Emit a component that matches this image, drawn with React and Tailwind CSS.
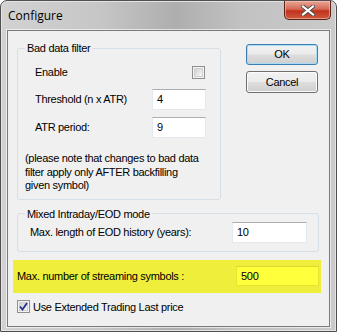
import React from "react";

const font = "font-['Liberation_Sans',Arial,sans-serif] text-[11px] tracking-[-0.3px] text-black";

const TextBox = ({ value, className = "", yellow = false }) => (
    <div
        className={
            "flex items-center pl-[4px] border " +
            (yellow
                ? "bg-[#ffff3c] border-[#e6e632] border-t-[#d8d830]"
                : "bg-white border-[#e3e9ef] border-t-[#abadb3]") +
            " " +
            className
        }
    >
        <span className="leading-none">{value}</span>
    </div>
);

const CheckBox = ({ checked }) => (
    <div className="w-[13px] h-[13px] border border-[#8e8f8f] bg-[#f4f4f4] p-[1px] shrink-0">
        <div className="w-full h-full border border-[#d0d0d0] bg-[linear-gradient(135deg,#cfcfcf_0%,#e6e6e6_55%,#f8f8f8_100%)] relative">
            {checked && (
                <svg viewBox="0 0 9 9" className="absolute -left-[1px] -top-[1px] w-[9px] h-[9px]">
                    <path d="M1 4.5 L3.5 7.5 L8 1" fill="none" stroke="#24318a" strokeWidth="1.8" />
                </svg>
            )}
        </div>
    </div>
);

const Group = ({ title, className = "", children }) => (
    <fieldset className={"border border-[#d5dfe5] rounded-[3px] " + className}>
        <legend className="ml-[7px] px-[2px] leading-[14px]">{title}</legend>
        {children}
    </fieldset>
);

const Button = ({ label, primary, className = "" }) => (
    <button
        className={
            "w-[72px] rounded-[3px] border flex items-center justify-center leading-none bg-[linear-gradient(180deg,#f2f2f2_0%,#ebebeb_48%,#dddddd_52%,#cfcfcf_100%)] " +
            (primary
                ? "border-[#3c7fb1] shadow-[inset_0_0_0_1px_#a7dcf4]"
                : "border-[#707070] shadow-[inset_0_0_0_1px_#fbfbfb]") +
            " " +
            className
        }
    >
        {label}
    </button>
);

export default function App() {
    return (
        <div className={"w-[337px] h-[332px] flex flex-col rounded-t-[7px] border border-[#505050] bg-[linear-gradient(90deg,#d2d2d2_0%,#c6c6c6_30%,#aeaeae_52%,#c2c2c2_72%,#cacaca_100%)] shadow-[inset_0_0_0_1px_#e4e4e4] " + font}>
            {/* title bar */}
            <div className="h-[28px] flex items-start justify-between pl-[7px] pr-[5px]">
                <span className="mt-[7px] font-['Open_Sans','Noto_Sans',sans-serif] text-[12px] tracking-normal leading-[16px]">
                    Configure
                </span>
                <div className="w-[47px] h-[19px] rounded-b-[5px] border border-t-0 border-[#5b2219] bg-[linear-gradient(180deg,#e8a796_0%,#d46a55_45%,#c2311c_55%,#cd5a3e_100%)] shadow-[inset_0_0_0_1px_rgba(255,200,190,0.55)] flex items-center justify-center">
                    <svg viewBox="0 0 14 11" className="w-[14px] h-[11px]">
                        <path d="M2 1.5 L12 9.5 M12 1.5 L2 9.5" stroke="#4a4a4a" strokeWidth="4" strokeLinecap="square" />
                        <path d="M2 1.5 L12 9.5 M12 1.5 L2 9.5" stroke="#ffffff" strokeWidth="2.2" strokeLinecap="square" />
                    </svg>
                </div>
            </div>

            {/* client area */}
            <div className="mx-[6px] mt-[1px] mb-[4px] flex-1 border border-[#7b7b7b] bg-[#f0f0f0] shadow-[0_0_0_1px_rgba(255,255,255,0.6)] flex flex-col">
                <div className="flex items-start pl-[9px]">
                    <Group title="Bad data filter" className="w-[204px] mt-[10px] pb-[6px]">
                        <div className="pl-[17px] pr-[14px]">
                            <div className="h-[13px] mt-[11px] flex items-center justify-between">
                                <span>Enable</span>
                                <div className="mr-[1px]">
                                    <CheckBox />
                                </div>
                            </div>
                            <div className="mt-[10px] flex items-center justify-between">
                                <span>Threshold (n x ATR)</span>
                                <TextBox value="4" className="w-[54px] h-[21px]" />
                            </div>
                            <div className="mt-[7px] flex items-center justify-between">
                                <span>ATR period:</span>
                                <TextBox value="9" className="w-[54px] h-[21px]" />
                            </div>
                        </div>
                        <p className="mt-[14px] pl-[7px] leading-[13.5px]">
                            (please note that changes to bad data
                            <br />
                            filter apply only AFTER backfilling
                            <br />
                            given symbol)
                        </p>
                    </Group>
                    <div className="ml-[25px] mt-[13px] flex flex-col gap-[6px]">
                        <Button label="OK" primary className="h-[21px]" />
                        <Button label="Cancel" className="h-[22px]" />
                    </div>
                </div>

                <Group title="Mixed Intraday/EOD mode" className="ml-[9px] w-[302px] mt-[7px] pb-[8px]">
                    <div className="mt-[1px] pl-[12px] pr-[11px] flex items-center justify-between">
                        <span>Max. length of EOD history (years):</span>
                        <TextBox value="10" className="w-[75px] h-[21px]" />
                    </div>
                </Group>

                <div className="ml-[5px] mt-[8px] w-[308px] h-[33px] bg-[#efef3b] pl-[4px] pr-[2px] flex items-center justify-between">
                    <span>Max. number of streaming symbols :</span>
                    <TextBox value="500" yellow className="w-[83px] h-[20px]" />
                </div>

                <div className="ml-[9px] mt-[6px] flex items-center gap-[3px]">
                    <CheckBox checked />
                    <span>Use Extended Trading Last price</span>
                </div>
            </div>
        </div>
    );
}
